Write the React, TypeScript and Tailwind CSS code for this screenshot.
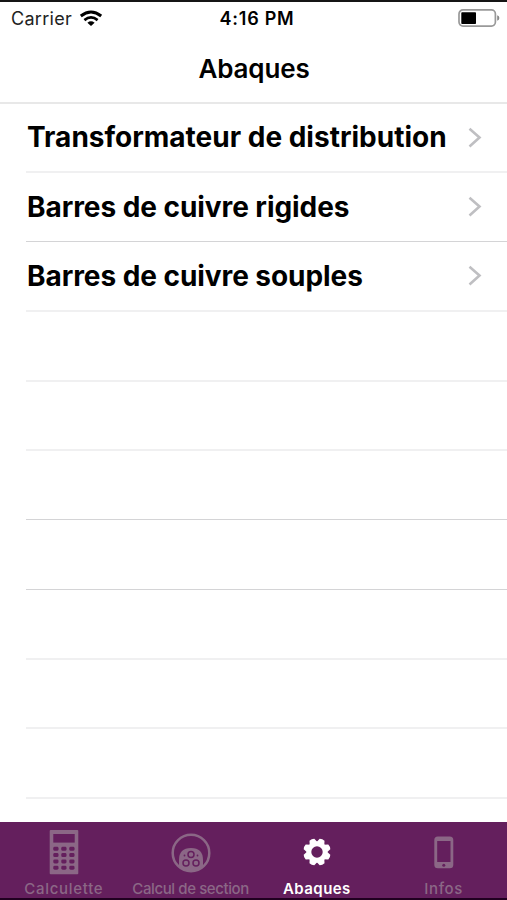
import React from "react";

type Row = { label?: string; box: string; text?: string };

const thin = "border-b border-[#d4d4d6]";
const soft = "border-b-2 border-[#f0f0f1]";

const rows: Row[] = [
  { label: "Transformateur de distribution", box: `h-[69px] ${soft}`, text: "tracking-normal pb-0.5" },
  { label: "Barres de cuivre rigides", box: `h-[69px] ${thin}`, text: "tracking-[-0.06px]" },
  { label: "Barres de cuivre souples", box: `h-[70px] ${soft}`, text: "tracking-[-0.06px]" },
  { box: `h-[70px] ${soft}` },
  { box: `h-[69px] ${soft}` },
  { box: `h-[69px] ${thin}` },
  { box: `h-[70px] ${thin}` },
  { box: `h-[70px] ${soft}` },
  { box: `h-[69px] ${soft}` },
  { box: `h-[70px] ${soft}` },
];

function Chevron() {
  return (
    <svg width="14" height="22" viewBox="0 0 14 22" fill="none" className="mr-[25px] shrink-0">
      <path d="M1.5 1.8L11.5 10.6L1.5 19.4" stroke="#bfbfc2" strokeWidth="2.6" />
    </svg>
  );
}

function Wifi() {
  return (
    <svg width="24" height="17" viewBox="0 0 24 17" fill="none" stroke="#000" strokeWidth="3">
      <path d="M1.8 6Q12 -2 22.2 6" />
      <path d="M5.4 10.1Q12 4.8 18.6 10.1" strokeWidth="2.7" />
      <path d="M8.4 12.7Q12 10 15.6 12.7L12 16Z" fill="#000" stroke="none" />
    </svg>
  );
}

function Battery() {
  return (
    <svg width="42" height="19" viewBox="0 0 42 19">
      <rect x="1" y="0.9" width="36.4" height="16.2" rx="4" fill="none" stroke="#999" strokeWidth="1.7" />
      <rect x="3.3" y="3.3" width="14.7" height="11.7" rx="0.8" fill="#000" />
      <path d="M39.2 6.3Q41.4 7 41.4 9T39.2 11.7Z" fill="#888" />
    </svg>
  );
}

function Calculator() {
  return (
    <svg width="30" height="46" viewBox="0 0 30 46">
      <rect x="0.7" y="0.9" width="28.6" height="44.4" rx="1" fill="#8b6786" />
      <rect x="4.3" y="5" width="21.4" height="8.6" fill="#641f5d" />
      {[17, 23.3, 29.6, 35.9].map((y) =>
        [4.3, 12.3, 20.3].map((x) => (
          <rect key={`${x}-${y}`} x={x} y={y + 0.8} width="5.2" height="4" rx="1.4" fill="#641f5d" />
        )),
      )}
    </svg>
  );
}

function Cable() {
  return (
    <svg width="40" height="40" viewBox="0 0 40 40" fill="none">
      <circle cx="20" cy="20" r="18.3" stroke="#8b6786" strokeWidth="2.5" />
      <path d="M8 34V27Q8 15 20 15T32 27V34Q20 43 8 34Z" fill="#8b6786" />
      <g stroke="#641f5d" strokeWidth="1.5">
        <circle cx="20" cy="21.5" r="3" />
        <circle cx="15" cy="30" r="3" />
        <circle cx="25" cy="30" r="3" />
      </g>
      <g fill="#641f5d">
        <circle cx="13.5" cy="22.5" r="0.9" />
        <circle cx="26.5" cy="22.5" r="0.9" />
      </g>
    </svg>
  );
}

function Gear() {
  return (
    <svg width="28" height="28" viewBox="-14 -14 28 28">
      <g fill="#fff">
        {[22.5, 67.5, 112.5, 157.5, 202.5, 247.5, 292.5, 337.5].map((a) => (
          <path key={a} d="M-4.4 -8.4L-2.6 -13.3Q0 -14.4 2.6 -13.3L4.4 -8.4Z" transform={`rotate(${a})`} />
        ))}
      </g>
      <circle r="8.1" fill="none" stroke="#fff" strokeWidth="4.8" />
    </svg>
  );
}

function Phone() {
  return (
    <svg width="20" height="33" viewBox="0 0 20 33">
      <rect x="0.3" y="0.5" width="19" height="31.8" rx="3.5" fill="#8b6786" />
      <rect x="3.2" y="5" width="13.3" height="21" fill="#641f5d" />
      <circle cx="9.8" cy="29.2" r="1.5" fill="#641f5d" />
    </svg>
  );
}

const tabs = [
  { label: "Calculette", icon: <Calculator />, pad: "pl-0.5", text: "text-[#8b6786] font-medium tracking-[0.7px] pl-px" },
  { label: "Calcul de section", icon: <Cable />, pad: "pl-0.5 pt-0.5", text: "text-[#8b6786] font-medium tracking-[-0.4px] pl-px" },
  { label: "Abaques", icon: <Gear />, pad: "", text: "text-white font-semibold tracking-[0.45px]" },
  { label: "Infos", icon: <Phone />, pad: "", text: "text-[#8b6786] font-medium tracking-[0.6px]" },
];

export default function App() {
  return (
    <div className="flex h-[900px] w-[507px] flex-col overflow-hidden border-t-2 border-[#151515] bg-white font-['Inter','Liberation_Sans',sans-serif] text-black">
      <div className="grid h-8 shrink-0 grid-cols-3 items-center">
        <div className="flex items-center gap-[7px] pl-[11px] text-[18px] tracking-[0.3px] text-[#222]">
          <span>Carrier</span>
          <Wifi />
        </div>
        <div className="pl-[7px] text-center text-[18px] font-semibold tracking-[0.75px]">
          4:16 PM
        </div>
        <div className="flex justify-end pr-[7px]">
          <Battery />
        </div>
      </div>
      <header className="flex h-[70px] shrink-0 items-center justify-center border-b-2 border-[#e8e8e8] pl-px text-[26px] font-semibold tracking-[-0.15px]">
        Abaques
      </header>
      <ul className="min-h-0 grow pl-[26px]">
        {rows.map((row, i) => (
          <li key={i} className={`flex items-center justify-between ${row.box}`}>
            {row.label && (
              <>
                <span className={`whitespace-nowrap pl-px text-[28px] font-bold ${row.text}`}>{row.label}</span>
                <Chevron />
              </>
            )}
          </li>
        ))}
      </ul>
      <nav className="grid h-[78px] shrink-0 grid-cols-4 border-b-2 border-b-[#200020] bg-[#641f5d]">
        {tabs.map((tab) => (
          <div key={tab.label} className="flex flex-col items-center">
            <div className={`flex h-[60px] items-center justify-center ${tab.pad}`}>{tab.icon}</div>
            <span className={`-mt-0.5 whitespace-nowrap text-[15px] leading-[18px] ${tab.text}`}>{tab.label}</span>
          </div>
        ))}
      </nav>
    </div>
  );
}
